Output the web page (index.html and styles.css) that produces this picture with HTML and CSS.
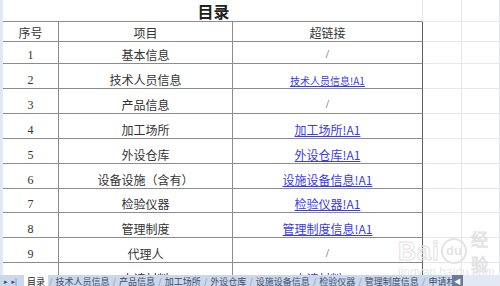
FILE: index.html
```html
<!DOCTYPE html>
<html lang="zh-CN">
<head>
<meta charset="UTF-8">
<title>目录</title>
<link rel="stylesheet" href="styles.css">
</head>
<body>

<div class="sheet">
    <div class="edge"></div>
    <div class="grid">
        <!-- title row -->
        <div class="cell title">目录</div>
        <div class="cell"></div>
        <div class="cell"></div>

        <div class="cell t">序号</div>
        <div class="cell t">项目</div>
        <div class="cell t last">超链接</div>
        <div class="cell"></div>
        <div class="cell"></div>

        <div class="cell t num">1</div>
        <div class="cell t">基本信息</div>
        <div class="cell t last slash">/</div>
        <div class="cell"></div>
        <div class="cell"></div>

        <div class="cell t num">2</div>
        <div class="cell t">技术人员信息</div>
        <div class="cell t last"><a class="small" href="#">技术人员信息!A1</a></div>
        <div class="cell"></div>
        <div class="cell"></div>

        <div class="cell t num">3</div>
        <div class="cell t">产品信息</div>
        <div class="cell t last slash">/</div>
        <div class="cell"></div>
        <div class="cell"></div>

        <div class="cell t num">4</div>
        <div class="cell t">加工场所</div>
        <div class="cell t last"><a href="#">加工场所!A1</a></div>
        <div class="cell"></div>
        <div class="cell"></div>

        <div class="cell t num">5</div>
        <div class="cell t">外设仓库</div>
        <div class="cell t last"><a href="#">外设仓库!A1</a></div>
        <div class="cell"></div>
        <div class="cell"></div>

        <div class="cell t num">6</div>
        <div class="cell t">设备设施（含有）</div>
        <div class="cell t last"><a href="#">设施设备信息!A1</a></div>
        <div class="cell"></div>
        <div class="cell"></div>

        <div class="cell t num">7</div>
        <div class="cell t">检验仪器</div>
        <div class="cell t last"><a href="#">检验仪器!A1</a></div>
        <div class="cell"></div>
        <div class="cell"></div>

        <div class="cell t num">8</div>
        <div class="cell t">管理制度</div>
        <div class="cell t last"><a href="#">管理制度信息!A1</a></div>
        <div class="cell"></div>
        <div class="cell"></div>

        <div class="cell t num">9</div>
        <div class="cell t">代理人</div>
        <div class="cell t last slash">/</div>
        <div class="cell"></div>
        <div class="cell"></div>

        <div class="cell t num">10</div>
        <div class="cell t">申请材料</div>
        <div class="cell t last"><a href="#">申请材料!A1</a></div>
        <div class="cell"></div>
        <div class="cell"></div>
    </div>

    <div class="watermark">
        <div class="wm-logo">
            <span class="wm-bai">Bai</span>
            <span class="wm-du">du</span>
            <span class="wm-cn">经验</span>
        </div>
        <div class="wm-url">jingyan.baidu.com</div>
    </div>
</div>

<div class="tabbar">
    <div class="nav"><span>&#9656;</span><span>&#9656;|</span></div>
    <div class="tabs">
        <span class="tab active">目录</span><span class="sep">/</span>
        <span class="tab">技术人员信息</span><span class="sep">/</span>
        <span class="tab">产品信息</span><span class="sep">/</span>
        <span class="tab">加工场所</span><span class="sep">/</span>
        <span class="tab">外设仓库</span><span class="sep">/</span>
        <span class="tab">设施设备信息</span><span class="sep">/</span>
        <span class="tab">检验仪器</span><span class="sep">/</span>
        <span class="tab">管理制度信息</span><span class="sep">/</span>
        <span class="tab">申请材料</span>
    </div>
    <div class="scroll-btn">&#9664;</div>
    <div class="scroll-track"></div>
</div>

</body>
</html>
```

FILE: styles.css
```css
body {
    margin: 0;
    width: 500px;
    height: 286px;
    overflow: hidden;
    background-color: #fff;
    font-family: "Noto Sans CJK SC", "DejaVu Sans", sans-serif;
    color: #333;
}

.sheet {
    position: relative;
    display: flex;
    height: 275px;
    overflow: hidden;
}

.edge {
    width: 3px;
    background-color: #dfe8f5;
}

.grid {
    display: grid;
    grid-template-columns: 56px 174px 190px 39px 38px;
    grid-template-rows: 22px 20px 22px 25px 25px 25px 25px 25px 24px 25px 25px 25px;
}

.cell {
    box-sizing: border-box;
    border-right: 1px solid #e4e7f0;
    border-bottom: 1px solid #e4e7f0;
    display: flex;
    align-items: flex-end;
    justify-content: center;
    padding-bottom: 1px;
    font-size: 12px;
    line-height: 14px;
    white-space: nowrap;
    overflow: hidden;
}

.title {
    grid-column: span 3;
    border-bottom-color: #8c8c8c;
    font-size: 16px;
    line-height: 18px;
    font-weight: bold;
    color: #222;
    padding-left: 2px;
}

.t {
    border-right-color: #8c8c8c;
    border-bottom-color: #8c8c8c;
}

.t.last {
    border-right-color: #606060;
}

.num {
    font-family: "Liberation Serif", serif;
    font-size: 12px;
}

.slash {
    font-family: "Liberation Serif", serif;
    color: #555;
    padding-bottom: 2px;
}

.cell a {
    color: #3a3aef;
    text-decoration: underline;
}

.cell a.small {
    font-size: 10px;
    line-height: 12px;
}

.watermark {
    position: absolute;
    left: 398px;
    top: 238px;
}

.wm-logo {
    display: flex;
    align-items: center;
    height: 26px;
}

.wm-bai {
    font-family: "Liberation Sans", sans-serif;
    font-size: 25px;
    font-weight: bold;
    color: transparent;
    -webkit-text-stroke: 1px #e2e2e2;
    letter-spacing: 1px;
}

.wm-du {
    width: 26px;
    height: 22px;
    margin-left: 1px;
    border: 2px solid #e4e4e4;
    border-radius: 50%;
    font-family: "Liberation Sans", sans-serif;
    font-size: 13px;
    font-weight: bold;
    line-height: 22px;
    text-align: center;
    color: #e4e4e4;
}

.wm-cn {
    margin-left: 4px;
    font-size: 17px;
    color: transparent;
    -webkit-text-stroke: 1px #e2e2e2;
}

.wm-url {
    font-family: "Liberation Sans", sans-serif;
    font-size: 12px;
    color: #e8e8e8;
    margin-top: 1px;
}

.tabbar {
    display: flex;
    height: 11px;
    background-color: #cbd7ea;
    font-size: 9px;
    line-height: 13px;
    color: #3c4d70;
    overflow: hidden;
}

.nav {
    width: 24px;
    padding-left: 4px;
    box-sizing: border-box;
    font-size: 7px;
    color: #2c4f8a;
    display: flex;
    gap: 4px;
}

.tabs {
    display: flex;
    width: 428px;
    overflow: hidden;
    white-space: nowrap;
}

.tab {
    padding: 0 2px;
}

.tab.active {
    background-color: #fff;
    color: #222;
    padding: 0 3px;
}

.sep {
    color: #8a97b0;
    padding: 0 1px;
}

.scroll-btn {
    width: 11px;
    background-color: #6a7c9c;
    color: #fff;
    font-size: 7px;
    text-align: center;
}

.scroll-track {
    flex: 1;
    background-color: #e3e9f3;
}
```
